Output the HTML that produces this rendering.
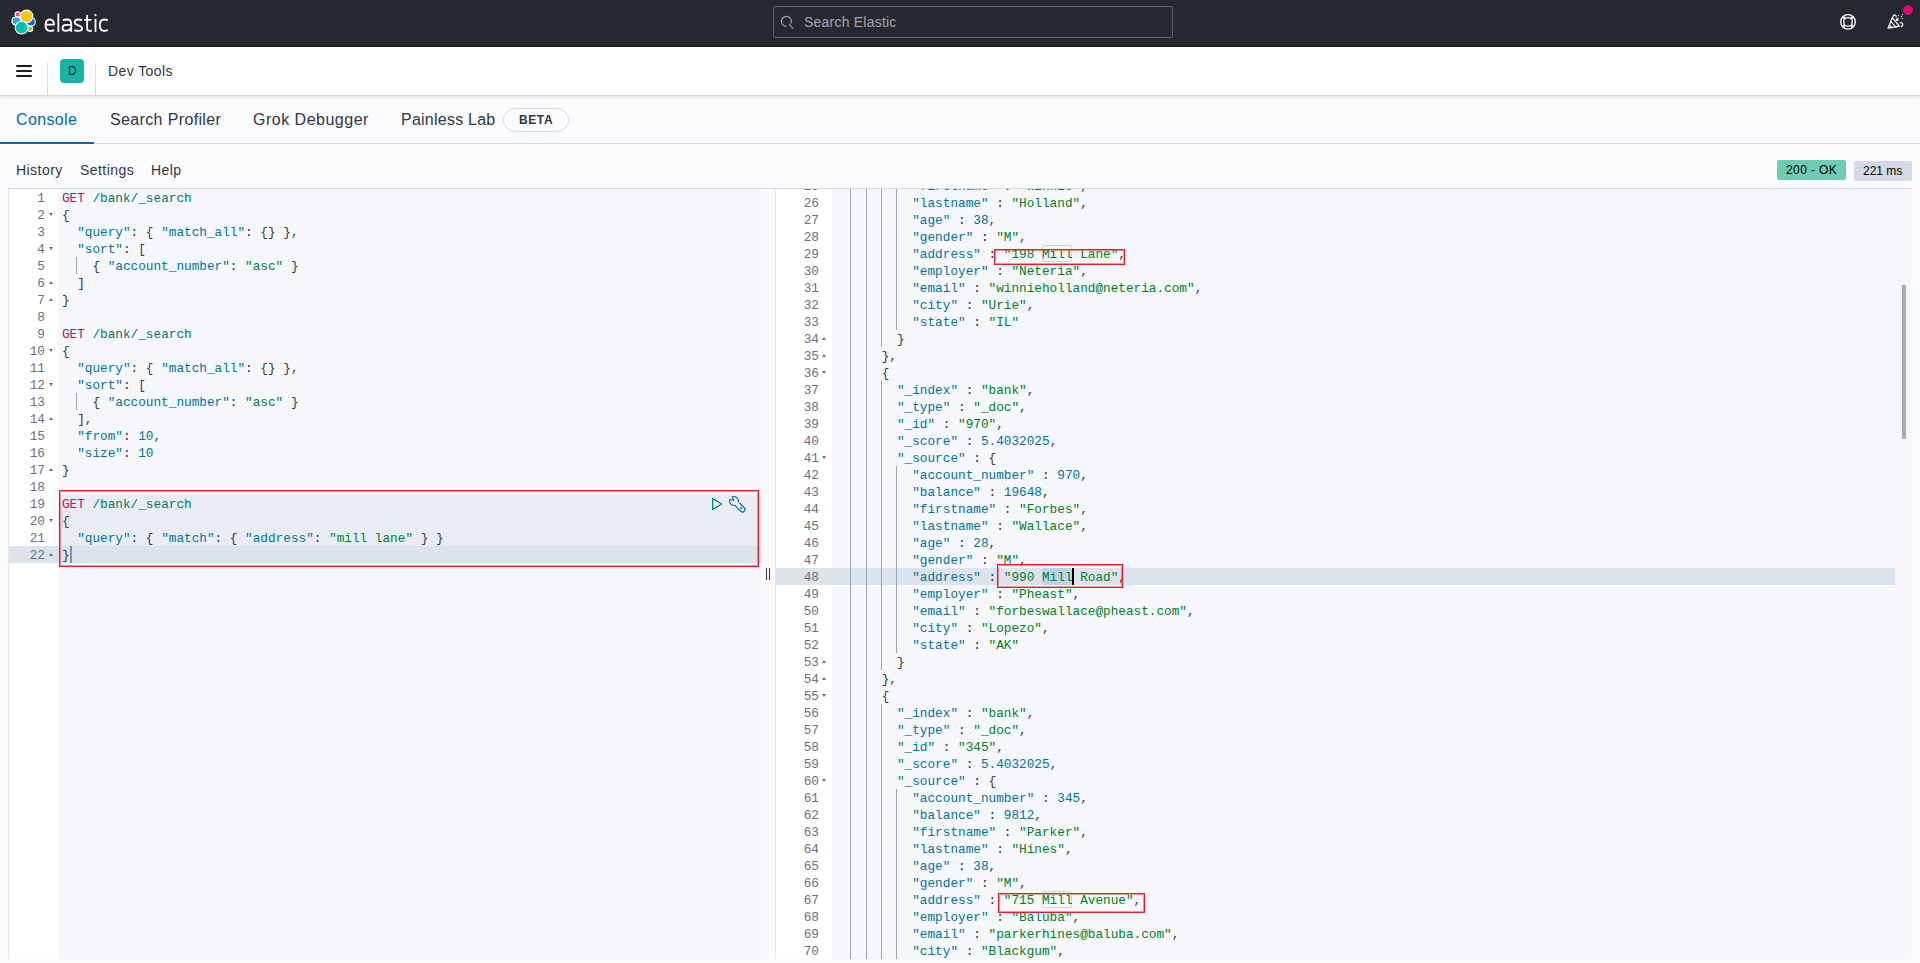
<!DOCTYPE html>
<html><head><meta charset="utf-8">
<style>
*{box-sizing:border-box;margin:0;padding:0}
html,body{width:1920px;height:963px;overflow:hidden;background:#fafbfd;font-family:"Liberation Sans",sans-serif;color:#343741}
.a{position:absolute}
#hdr{position:absolute;left:0;top:0;width:1920px;height:47px;background:#25282f;border-bottom:1px solid #1a1c21}
#bar{position:absolute;left:0;top:47px;width:1920px;height:49px;background:#fff;border-bottom:1px solid #d3dae6;box-shadow:0 1px 3px rgba(0,0,0,.06),0 3px 6px rgba(0,0,0,.03)}
.txt{position:absolute;white-space:pre;line-height:1}
.tab{position:absolute;top:112px;font-size:16px;letter-spacing:.36px;color:#343741;white-space:pre;line-height:16px}
.ctl{position:absolute;top:163px;font-size:14px;letter-spacing:.45px;color:#343741;white-space:pre;line-height:14px}
.ed{position:absolute;background:#f5f7fa}
.gut{position:absolute;background:#fff}
.ln{position:absolute;height:17px;line-height:17px;text-align:right;font-family:"Liberation Mono",monospace;font-size:12.72px;color:#69707d;white-space:pre;padding-top:1px}
.cl{position:absolute;height:17px;line-height:17px;font-family:"Liberation Mono",monospace;font-size:12.72px;color:#343741;white-space:pre;padding-top:1px}
.g{position:absolute;width:1px;height:17px}
.fold{position:absolute;width:0;height:0;border-left:2.5px solid transparent;border-right:2.5px solid transparent}
.fold.d{border-top:3px solid #69707d}
.fold.u{border-bottom:3px solid #69707d}
.m{color:#c80a68}
.u{color:#00756c}
.k{color:#0073a0}
.s{color:#018026}
.n{color:#0073a0}
.rb{position:absolute;border:1px solid #ec1c24;box-shadow:inset 0 0 0 1px rgba(236,28,36,.45)}
</style></head><body>
<!-- top header -->
<div id="hdr"></div>
<svg class="a" style="left:0;top:0" width="48" height="47" viewBox="0 0 48 47">
  <g stroke="#fff" stroke-width="1.1">
  <circle cx="17.8" cy="14.6" r="2.7" fill="#f04e98"/>
  <path d="M13.2 17.6 C16 16.6 19.5 17.2 21.2 19.6 L18.6 25.2 C16.2 25.8 13.8 25.2 12.6 23.4 C11.6 21.6 11.8 18.6 13.2 17.6Z" fill="#1ba9f5"/>
  <path d="M34.2 18.6 C35.6 19.8 35.6 23.4 34.2 24.8 C32.6 26.2 29.4 25.8 27.8 25 L25.6 22.4 L27.6 19.2 C29.6 18.2 32.6 17.6 34.2 18.6Z" fill="#0b64dd"/>
  <circle cx="30" cy="28.8" r="2.7" fill="#93c90e"/>
  <circle cx="26.6" cy="16.4" r="6.3" fill="#fec514"/>
  <circle cx="21.6" cy="27.6" r="6.4" fill="#00bfb3"/>
  </g>
</svg>
<svg class="a" style="left:0;top:0" width="120" height="47" viewBox="0 0 120 47"><g fill="none" stroke="#fff" stroke-width="1.8">
<path d="M45.6 24.7 H54 C54 21.1 52.3 19.5 49.8 19.5 C46.8 19.5 45.5 22 45.5 25.2 C45.5 28.8 47.2 30.9 50.3 30.9 C51.8 30.9 53 30.6 54.2 30.1"/>
<path d="M58.35 13.6 V31.8"/>
<path d="M62.8 20.2 C64 19.7 65.5 19.5 66.8 19.5 C69.8 19.5 71.2 20.8 71.2 23.5 V31.8 M71.2 24.9 H66.3 C63.8 24.9 62.5 26.2 62.5 28 C62.5 29.9 63.9 30.9 65.8 30.9 C68.4 30.9 70.3 29.8 71.2 28.3"/>
<path d="M82 20.1 C80.8 19.6 79.5 19.5 78.2 19.5 C75.8 19.5 74.7 20.8 74.7 22.3 C74.7 24 75.8 24.7 78.3 25.3 C81 25.9 82.1 26.8 82.1 28.5 C82.1 30.2 80.8 30.9 78.3 30.9 C76.8 30.9 75.5 30.6 74.2 30.1"/>
<path d="M87.15 14.9 V28.6 C87.15 30.3 88 30.9 89.5 30.9 C90.3 30.9 91.2 30.8 91.9 30.6 M84.2 19.9 H91.4"/>
<path d="M95.5 18.9 V31.8"/>
<path d="M107.8 20.2 C106.6 19.7 105.4 19.5 104.2 19.5 C100.9 19.5 99.8 22 99.8 25.2 C99.8 28.6 101 30.9 104.3 30.9 C105.6 30.9 106.8 30.6 107.8 30.2"/>
</g><circle cx="95.5" cy="15.2" r="1.1" fill="#fff"/></svg>
<!-- search -->
<div class="a" style="left:773px;top:6px;width:400px;height:32px;border:1px solid #5a5e66;border-radius:2px;background:#25282f"></div>
<svg class="a" style="left:778px;top:12px" width="18" height="18" viewBox="0 0 18 18"><g fill="none" stroke="#a2a6ad" stroke-width="1.15" stroke-linecap="round"><path d="M7.96 14.38 A5 5 0 1 1 13.1 11.11"/><path d="M11.4 12.6 L14.9 16.06"/></g></svg>
<div class="txt" style="left:804px;top:15px;font-size:14px;letter-spacing:.22px;color:#a2a6ad">Search Elastic</div>
<!-- help icon -->
<svg class="a" style="left:1838px;top:12px" width="20" height="20" viewBox="0 0 20 20"><g fill="none" stroke="#fff"><circle cx="10" cy="9.9" r="7.3" stroke-width="1.3"/><circle cx="10" cy="9.9" r="4.3" stroke-width="1.3"/><path d="M5.05 4.95 L6.75 6.65 M14.95 4.95 L13.25 6.65 M5.05 14.85 L6.75 13.15 M14.95 14.85 L13.25 13.15" stroke-width="2.4"/></g></svg>
<!-- news icon -->
<svg class="a" style="left:1884px;top:10px" width="24" height="24" viewBox="0 0 24 24"><g fill="none" stroke="#fff" stroke-width="1.2" stroke-linecap="round" stroke-linejoin="round"><path d="M4.1 18.1 L8.4 7.6 L15.3 16.1 Z"/><path d="M6.9 11.6 L11.9 17.1 M5.5 15.2 L8 17.9"/><path d="M9 6.6 C9.2 4.2 12.2 4.1 12.2 6.8"/><path d="M16.2 12.6 C19.2 12.3 19.6 15.8 17.3 16.6"/><path d="M14.3 8.4 L12.6 10.3 M12.5 8.9 L12.6 10.3 L14 10.3"/></g><g fill="#fff"><circle cx="14.4" cy="5.6" r=".6"/><circle cx="17.5" cy="6.4" r=".6"/><circle cx="18.4" cy="4.5" r=".6"/><circle cx="18.4" cy="8.5" r=".6"/></g></svg>
<div class="a" style="left:1902.7px;top:4.7px;width:10.6px;height:10.6px;border-radius:50%;background:#dd0a73"></div>

<!-- breadcrumb bar -->
<div id="bar"></div>
<div class="a" style="left:16px;top:65px;width:16px;height:2px;background:#1a1c21;border-radius:1px"></div>
<div class="a" style="left:16px;top:70px;width:16px;height:2px;background:#1a1c21;border-radius:1px"></div>
<div class="a" style="left:16px;top:75px;width:16px;height:2px;background:#1a1c21;border-radius:1px"></div>
<div class="a" style="left:47px;top:63px;width:1px;height:32px;background:#d3dae6"></div>
<div class="a" style="left:60px;top:59px;width:24px;height:24px;border-radius:4px;background:#16b4a7"></div>
<div class="txt" style="left:68px;top:65px;font-size:12px;color:#1a1c21">D</div>
<div class="a" style="left:95px;top:63px;width:1px;height:32px;background:#d3dae6"></div>
<div class="txt" style="left:108px;top:64px;font-size:14px;letter-spacing:.4px;color:#343741">Dev Tools</div>

<!-- tabs -->
<div class="a" style="left:0;top:143px;width:1920px;height:1px;background:#d3dae6"></div>
<div class="a" style="left:0;top:142px;width:94px;height:2px;background:#006bb4"></div>
<div class="tab" style="left:16px;color:#006bb4">Console</div>
<div class="tab" style="left:110px">Search Profiler</div>
<div class="tab" style="left:253px;letter-spacing:.5px">Grok Debugger</div>
<div class="tab" style="left:401px;letter-spacing:.24px">Painless Lab</div>
<div class="a" style="left:503px;top:108px;width:66px;height:24px;border:1px solid #d3dae6;border-radius:12px"></div>
<div class="txt" style="left:519px;top:114px;font-size:12px;font-weight:bold;letter-spacing:.6px;color:#343741">BETA</div>

<!-- controls -->
<div class="ctl" style="left:16px">History</div>
<div class="ctl" style="left:80px">Settings</div>
<div class="ctl" style="left:151px">Help</div>
<div class="a" style="left:1777px;top:160px;width:69px;height:20px;border-radius:2px;background:#6dccb1"></div>
<div class="txt" style="left:1786px;top:164px;font-size:12px;letter-spacing:.4px;color:#000">200 - OK</div>
<div class="a" style="left:1854px;top:161px;width:58px;height:20px;border-radius:2px;background:#d3dae6"></div>
<div class="txt" style="left:1863px;top:165px;font-size:12px;color:#000">221 ms</div>

<!-- editor frame -->
<div class="a" style="left:8px;top:188px;width:1904px;height:1px;background:#d3dae6"></div>
<div class="a" style="left:8px;top:189px;width:1px;height:770px;background:#e3e8f0"></div>
<div class="gut" style="left:9px;top:189px;width:49px;height:770px"></div>
<div class="ed" style="left:58px;top:189px;width:703px;height:770px"></div>
<div class="a" style="left:761px;top:189px;width:14px;height:770px;background:#f9fafc"></div>
<div class="a" style="left:775px;top:189px;width:1px;height:770px;background:#e3e8f0"></div>
<div class="gut" style="left:776px;top:189px;width:56px;height:770px"></div>
<div class="ed" style="left:832px;top:189px;width:1079px;height:770px"></div>

<!-- left markers -->
<div class="a" style="left:58px;top:495px;width:703px;height:51px;background:#e9edf3"></div>
<div class="a" style="left:9px;top:546px;width:752px;height:17px;background:#dde3ec"></div>
<div class="a" style="left:62px;top:511px;width:7px;height:17px;border:1px solid #d3dae6;border-radius:2px"></div>
<div class="ln" style="top:189px;left:9px;width:36px">1</div><div class="cl" style="left:61.90px;top:189px"><span class="m">GET</span> <span class="u">/bank/_search</span></div><div class="ln" style="top:206px;left:9px;width:36px">2</div><div class="fold d" style="left:49px;top:213px"></div><div class="cl" style="left:61.90px;top:206px">{</div><div class="ln" style="top:223px;left:9px;width:36px">3</div><div class="cl" style="left:61.90px;top:223px">  <span class="k">&quot;query&quot;</span>: { <span class="k">&quot;match_all&quot;</span>: {} },</div><div class="ln" style="top:240px;left:9px;width:36px">4</div><div class="fold d" style="left:49px;top:247px"></div><div class="cl" style="left:61.90px;top:240px">  <span class="k">&quot;sort&quot;</span>: [</div><div class="ln" style="top:257px;left:9px;width:36px">5</div><div class="g" style="left:76px;top:257px;background:#98a2b3"></div><div class="cl" style="left:61.90px;top:257px">    { <span class="k">&quot;account_number&quot;</span>: <span class="s">&quot;asc&quot;</span> }</div><div class="ln" style="top:274px;left:9px;width:36px">6</div><div class="fold u" style="left:49px;top:281px"></div><div class="cl" style="left:61.90px;top:274px">  ]</div><div class="ln" style="top:291px;left:9px;width:36px">7</div><div class="fold u" style="left:49px;top:298px"></div><div class="cl" style="left:61.90px;top:291px">}</div><div class="ln" style="top:308px;left:9px;width:36px">8</div><div class="cl" style="left:61.90px;top:308px"></div><div class="ln" style="top:325px;left:9px;width:36px">9</div><div class="cl" style="left:61.90px;top:325px"><span class="m">GET</span> <span class="u">/bank/_search</span></div><div class="ln" style="top:342px;left:9px;width:36px">10</div><div class="fold d" style="left:49px;top:349px"></div><div class="cl" style="left:61.90px;top:342px">{</div><div class="ln" style="top:359px;left:9px;width:36px">11</div><div class="cl" style="left:61.90px;top:359px">  <span class="k">&quot;query&quot;</span>: { <span class="k">&quot;match_all&quot;</span>: {} },</div><div class="ln" style="top:376px;left:9px;width:36px">12</div><div class="fold d" style="left:49px;top:383px"></div><div class="cl" style="left:61.90px;top:376px">  <span class="k">&quot;sort&quot;</span>: [</div><div class="ln" style="top:393px;left:9px;width:36px">13</div><div class="g" style="left:76px;top:393px;background:#98a2b3"></div><div class="cl" style="left:61.90px;top:393px">    { <span class="k">&quot;account_number&quot;</span>: <span class="s">&quot;asc&quot;</span> }</div><div class="ln" style="top:410px;left:9px;width:36px">14</div><div class="fold u" style="left:49px;top:417px"></div><div class="cl" style="left:61.90px;top:410px">  ],</div><div class="ln" style="top:427px;left:9px;width:36px">15</div><div class="cl" style="left:61.90px;top:427px">  <span class="k">&quot;from&quot;</span>: <span class="n">10</span>,</div><div class="ln" style="top:444px;left:9px;width:36px">16</div><div class="cl" style="left:61.90px;top:444px">  <span class="k">&quot;size&quot;</span>: <span class="n">10</span></div><div class="ln" style="top:461px;left:9px;width:36px">17</div><div class="fold u" style="left:49px;top:468px"></div><div class="cl" style="left:61.90px;top:461px">}</div><div class="ln" style="top:478px;left:9px;width:36px">18</div><div class="cl" style="left:61.90px;top:478px"></div><div class="ln" style="top:495px;left:9px;width:36px">19</div><div class="cl" style="left:61.90px;top:495px"><span class="m">GET</span> <span class="u">/bank/_search</span></div><div class="ln" style="top:512px;left:9px;width:36px">20</div><div class="fold d" style="left:49px;top:519px"></div><div class="cl" style="left:61.90px;top:512px">{</div><div class="ln" style="top:529px;left:9px;width:36px">21</div><div class="cl" style="left:61.90px;top:529px">  <span class="k">&quot;query&quot;</span>: { <span class="k">&quot;match&quot;</span>: { <span class="k">&quot;address&quot;</span>: <span class="s">&quot;mill lane&quot;</span> } }</div><div class="ln" style="top:546px;left:9px;width:36px">22</div><div class="fold u" style="left:49px;top:553px"></div><div class="cl" style="left:61.90px;top:546px">}</div>
<div class="a" style="left:70px;top:546px;width:2px;height:17px;background:#8a919e"></div>
<div class="rb" style="left:59px;top:490px;width:700px;height:77px"></div>
<svg class="a" style="left:710px;top:496px" width="14" height="16" viewBox="0 0 14 16"><path d="M2.6 2.4 L11.8 8 L2.6 13.6 Z" fill="none" stroke="#017d73" stroke-width="1.2" stroke-linejoin="round"/></svg>
<svg class="a" style="left:724px;top:491px" width="24" height="24" viewBox="0 0 24 24"><path d="M8.48 5.82 A4.45 4.45 0 0 1 14.36 10.89 M15.97 12.51 L20.22 16.75 A2.45 2.45 0 0 1 16.75 20.22 L10.89 14.36 A4.45 4.45 0 0 1 5.82 8.48 L9.5 9.5 L8.48 5.82" fill="none" stroke="#006bb4" stroke-width="1.15" stroke-linejoin="round" stroke-linecap="round"/><circle cx="17.14" cy="17.14" r=".95" fill="#006bb4"/></svg>
<!-- resizer -->
<div class="a" style="left:766px;top:568px;width:1px;height:12px;background:#343741"></div>
<div class="a" style="left:769px;top:568px;width:1px;height:12px;background:#343741"></div>

<!-- right markers -->
<div class="a" style="left:776px;top:568px;width:1119px;height:17px;background:#dde3ec"></div>
<div class="a" style="left:1042px;top:568px;width:30px;height:17px;background:#b9d3ea;border-radius:3px"></div>
<div class="a" style="left:1042px;top:245px;width:30px;height:17px;border:1px solid #ccd4df;border-radius:2px"></div>
<div class="a" style="left:1042px;top:891px;width:30px;height:17px;border:1px solid #ccd4df;border-radius:2px"></div>
<div class="a" style="left:0;top:189px;width:1920px;height:770px;overflow:hidden"><div class="ln" style="top:-12px;left:776px;width:43px">25</div><div class="g" style="left:850px;top:-12px;background:#98a2b3"></div><div class="g" style="left:866px;top:-12px;background:#98a2b3"></div><div class="g" style="left:881px;top:-12px;background:#98a2b3"></div><div class="g" style="left:896px;top:-12px;background:#98a2b3"></div><div class="cl" style="left:835.90px;top:-12px">          <span class="k">&quot;firstname&quot;</span> : <span class="s">&quot;Winnie&quot;</span>,</div><div class="ln" style="top:5px;left:776px;width:43px">26</div><div class="g" style="left:850px;top:5px;background:#98a2b3"></div><div class="g" style="left:866px;top:5px;background:#98a2b3"></div><div class="g" style="left:881px;top:5px;background:#98a2b3"></div><div class="g" style="left:896px;top:5px;background:#98a2b3"></div><div class="cl" style="left:835.90px;top:5px">          <span class="k">&quot;lastname&quot;</span> : <span class="s">&quot;Holland&quot;</span>,</div><div class="ln" style="top:22px;left:776px;width:43px">27</div><div class="g" style="left:850px;top:22px;background:#98a2b3"></div><div class="g" style="left:866px;top:22px;background:#98a2b3"></div><div class="g" style="left:881px;top:22px;background:#98a2b3"></div><div class="g" style="left:896px;top:22px;background:#98a2b3"></div><div class="cl" style="left:835.90px;top:22px">          <span class="k">&quot;age&quot;</span> : <span class="n">38</span>,</div><div class="ln" style="top:39px;left:776px;width:43px">28</div><div class="g" style="left:850px;top:39px;background:#98a2b3"></div><div class="g" style="left:866px;top:39px;background:#98a2b3"></div><div class="g" style="left:881px;top:39px;background:#98a2b3"></div><div class="g" style="left:896px;top:39px;background:#98a2b3"></div><div class="cl" style="left:835.90px;top:39px">          <span class="k">&quot;gender&quot;</span> : <span class="s">&quot;M&quot;</span>,</div><div class="ln" style="top:56px;left:776px;width:43px">29</div><div class="g" style="left:850px;top:56px;background:#98a2b3"></div><div class="g" style="left:866px;top:56px;background:#98a2b3"></div><div class="g" style="left:881px;top:56px;background:#98a2b3"></div><div class="g" style="left:896px;top:56px;background:#98a2b3"></div><div class="cl" style="left:835.90px;top:56px">          <span class="k">&quot;address&quot;</span> : <span class="s">&quot;198 Mill Lane&quot;</span>,</div><div class="ln" style="top:73px;left:776px;width:43px">30</div><div class="g" style="left:850px;top:73px;background:#98a2b3"></div><div class="g" style="left:866px;top:73px;background:#98a2b3"></div><div class="g" style="left:881px;top:73px;background:#98a2b3"></div><div class="g" style="left:896px;top:73px;background:#98a2b3"></div><div class="cl" style="left:835.90px;top:73px">          <span class="k">&quot;employer&quot;</span> : <span class="s">&quot;Neteria&quot;</span>,</div><div class="ln" style="top:90px;left:776px;width:43px">31</div><div class="g" style="left:850px;top:90px;background:#98a2b3"></div><div class="g" style="left:866px;top:90px;background:#98a2b3"></div><div class="g" style="left:881px;top:90px;background:#98a2b3"></div><div class="g" style="left:896px;top:90px;background:#98a2b3"></div><div class="cl" style="left:835.90px;top:90px">          <span class="k">&quot;email&quot;</span> : <span class="s">&quot;winnieholland@neteria.com&quot;</span>,</div><div class="ln" style="top:107px;left:776px;width:43px">32</div><div class="g" style="left:850px;top:107px;background:#98a2b3"></div><div class="g" style="left:866px;top:107px;background:#98a2b3"></div><div class="g" style="left:881px;top:107px;background:#98a2b3"></div><div class="g" style="left:896px;top:107px;background:#98a2b3"></div><div class="cl" style="left:835.90px;top:107px">          <span class="k">&quot;city&quot;</span> : <span class="s">&quot;Urie&quot;</span>,</div><div class="ln" style="top:124px;left:776px;width:43px">33</div><div class="g" style="left:850px;top:124px;background:#98a2b3"></div><div class="g" style="left:866px;top:124px;background:#98a2b3"></div><div class="g" style="left:881px;top:124px;background:#98a2b3"></div><div class="g" style="left:896px;top:124px;background:#98a2b3"></div><div class="cl" style="left:835.90px;top:124px">          <span class="k">&quot;state&quot;</span> : <span class="s">&quot;IL&quot;</span></div><div class="ln" style="top:141px;left:776px;width:43px">34</div><div class="fold u" style="left:822px;top:148px"></div><div class="g" style="left:850px;top:141px;background:#98a2b3"></div><div class="g" style="left:866px;top:141px;background:#98a2b3"></div><div class="g" style="left:881px;top:141px;background:#98a2b3"></div><div class="cl" style="left:835.90px;top:141px">        }</div><div class="ln" style="top:158px;left:776px;width:43px">35</div><div class="fold u" style="left:822px;top:165px"></div><div class="g" style="left:850px;top:158px;background:#98a2b3"></div><div class="g" style="left:866px;top:158px;background:#98a2b3"></div><div class="cl" style="left:835.90px;top:158px">      },</div><div class="ln" style="top:175px;left:776px;width:43px">36</div><div class="fold d" style="left:822px;top:182px"></div><div class="g" style="left:850px;top:175px;background:#98a2b3"></div><div class="g" style="left:866px;top:175px;background:#98a2b3"></div><div class="cl" style="left:835.90px;top:175px">      {</div><div class="ln" style="top:192px;left:776px;width:43px">37</div><div class="g" style="left:850px;top:192px;background:#98a2b3"></div><div class="g" style="left:866px;top:192px;background:#98a2b3"></div><div class="g" style="left:881px;top:192px;background:#98a2b3"></div><div class="cl" style="left:835.90px;top:192px">        <span class="k">&quot;_index&quot;</span> : <span class="s">&quot;bank&quot;</span>,</div><div class="ln" style="top:209px;left:776px;width:43px">38</div><div class="g" style="left:850px;top:209px;background:#98a2b3"></div><div class="g" style="left:866px;top:209px;background:#98a2b3"></div><div class="g" style="left:881px;top:209px;background:#98a2b3"></div><div class="cl" style="left:835.90px;top:209px">        <span class="k">&quot;_type&quot;</span> : <span class="s">&quot;_doc&quot;</span>,</div><div class="ln" style="top:226px;left:776px;width:43px">39</div><div class="g" style="left:850px;top:226px;background:#98a2b3"></div><div class="g" style="left:866px;top:226px;background:#98a2b3"></div><div class="g" style="left:881px;top:226px;background:#98a2b3"></div><div class="cl" style="left:835.90px;top:226px">        <span class="k">&quot;_id&quot;</span> : <span class="s">&quot;970&quot;</span>,</div><div class="ln" style="top:243px;left:776px;width:43px">40</div><div class="g" style="left:850px;top:243px;background:#98a2b3"></div><div class="g" style="left:866px;top:243px;background:#98a2b3"></div><div class="g" style="left:881px;top:243px;background:#98a2b3"></div><div class="cl" style="left:835.90px;top:243px">        <span class="k">&quot;_score&quot;</span> : <span class="n">5.4032025</span>,</div><div class="ln" style="top:260px;left:776px;width:43px">41</div><div class="fold d" style="left:822px;top:267px"></div><div class="g" style="left:850px;top:260px;background:#98a2b3"></div><div class="g" style="left:866px;top:260px;background:#98a2b3"></div><div class="g" style="left:881px;top:260px;background:#98a2b3"></div><div class="cl" style="left:835.90px;top:260px">        <span class="k">&quot;_source&quot;</span> : {</div><div class="ln" style="top:277px;left:776px;width:43px">42</div><div class="g" style="left:850px;top:277px;background:#98a2b3"></div><div class="g" style="left:866px;top:277px;background:#98a2b3"></div><div class="g" style="left:881px;top:277px;background:#98a2b3"></div><div class="g" style="left:896px;top:277px;background:#98a2b3"></div><div class="cl" style="left:835.90px;top:277px">          <span class="k">&quot;account_number&quot;</span> : <span class="n">970</span>,</div><div class="ln" style="top:294px;left:776px;width:43px">43</div><div class="g" style="left:850px;top:294px;background:#98a2b3"></div><div class="g" style="left:866px;top:294px;background:#98a2b3"></div><div class="g" style="left:881px;top:294px;background:#98a2b3"></div><div class="g" style="left:896px;top:294px;background:#98a2b3"></div><div class="cl" style="left:835.90px;top:294px">          <span class="k">&quot;balance&quot;</span> : <span class="n">19648</span>,</div><div class="ln" style="top:311px;left:776px;width:43px">44</div><div class="g" style="left:850px;top:311px;background:#98a2b3"></div><div class="g" style="left:866px;top:311px;background:#98a2b3"></div><div class="g" style="left:881px;top:311px;background:#98a2b3"></div><div class="g" style="left:896px;top:311px;background:#98a2b3"></div><div class="cl" style="left:835.90px;top:311px">          <span class="k">&quot;firstname&quot;</span> : <span class="s">&quot;Forbes&quot;</span>,</div><div class="ln" style="top:328px;left:776px;width:43px">45</div><div class="g" style="left:850px;top:328px;background:#98a2b3"></div><div class="g" style="left:866px;top:328px;background:#98a2b3"></div><div class="g" style="left:881px;top:328px;background:#98a2b3"></div><div class="g" style="left:896px;top:328px;background:#98a2b3"></div><div class="cl" style="left:835.90px;top:328px">          <span class="k">&quot;lastname&quot;</span> : <span class="s">&quot;Wallace&quot;</span>,</div><div class="ln" style="top:345px;left:776px;width:43px">46</div><div class="g" style="left:850px;top:345px;background:#98a2b3"></div><div class="g" style="left:866px;top:345px;background:#98a2b3"></div><div class="g" style="left:881px;top:345px;background:#98a2b3"></div><div class="g" style="left:896px;top:345px;background:#98a2b3"></div><div class="cl" style="left:835.90px;top:345px">          <span class="k">&quot;age&quot;</span> : <span class="n">28</span>,</div><div class="ln" style="top:362px;left:776px;width:43px">47</div><div class="g" style="left:850px;top:362px;background:#98a2b3"></div><div class="g" style="left:866px;top:362px;background:#98a2b3"></div><div class="g" style="left:881px;top:362px;background:#98a2b3"></div><div class="g" style="left:896px;top:362px;background:#98a2b3"></div><div class="cl" style="left:835.90px;top:362px">          <span class="k">&quot;gender&quot;</span> : <span class="s">&quot;M&quot;</span>,</div><div class="ln" style="top:379px;left:776px;width:43px">48</div><div class="g" style="left:850px;top:379px;background:#98a2b3"></div><div class="g" style="left:866px;top:379px;background:#98a2b3"></div><div class="g" style="left:881px;top:379px;background:#98a2b3"></div><div class="g" style="left:896px;top:379px;background:#98a2b3"></div><div class="cl" style="left:835.90px;top:379px">          <span class="k">&quot;address&quot;</span> : <span class="s">&quot;990 Mill Road&quot;</span>,</div><div class="ln" style="top:396px;left:776px;width:43px">49</div><div class="g" style="left:850px;top:396px;background:#98a2b3"></div><div class="g" style="left:866px;top:396px;background:#98a2b3"></div><div class="g" style="left:881px;top:396px;background:#98a2b3"></div><div class="g" style="left:896px;top:396px;background:#98a2b3"></div><div class="cl" style="left:835.90px;top:396px">          <span class="k">&quot;employer&quot;</span> : <span class="s">&quot;Pheast&quot;</span>,</div><div class="ln" style="top:413px;left:776px;width:43px">50</div><div class="g" style="left:850px;top:413px;background:#98a2b3"></div><div class="g" style="left:866px;top:413px;background:#98a2b3"></div><div class="g" style="left:881px;top:413px;background:#98a2b3"></div><div class="g" style="left:896px;top:413px;background:#98a2b3"></div><div class="cl" style="left:835.90px;top:413px">          <span class="k">&quot;email&quot;</span> : <span class="s">&quot;forbeswallace@pheast.com&quot;</span>,</div><div class="ln" style="top:430px;left:776px;width:43px">51</div><div class="g" style="left:850px;top:430px;background:#98a2b3"></div><div class="g" style="left:866px;top:430px;background:#98a2b3"></div><div class="g" style="left:881px;top:430px;background:#98a2b3"></div><div class="g" style="left:896px;top:430px;background:#98a2b3"></div><div class="cl" style="left:835.90px;top:430px">          <span class="k">&quot;city&quot;</span> : <span class="s">&quot;Lopezo&quot;</span>,</div><div class="ln" style="top:447px;left:776px;width:43px">52</div><div class="g" style="left:850px;top:447px;background:#98a2b3"></div><div class="g" style="left:866px;top:447px;background:#98a2b3"></div><div class="g" style="left:881px;top:447px;background:#98a2b3"></div><div class="g" style="left:896px;top:447px;background:#98a2b3"></div><div class="cl" style="left:835.90px;top:447px">          <span class="k">&quot;state&quot;</span> : <span class="s">&quot;AK&quot;</span></div><div class="ln" style="top:464px;left:776px;width:43px">53</div><div class="fold u" style="left:822px;top:471px"></div><div class="g" style="left:850px;top:464px;background:#98a2b3"></div><div class="g" style="left:866px;top:464px;background:#98a2b3"></div><div class="g" style="left:881px;top:464px;background:#98a2b3"></div><div class="cl" style="left:835.90px;top:464px">        }</div><div class="ln" style="top:481px;left:776px;width:43px">54</div><div class="fold u" style="left:822px;top:488px"></div><div class="g" style="left:850px;top:481px;background:#98a2b3"></div><div class="g" style="left:866px;top:481px;background:#98a2b3"></div><div class="cl" style="left:835.90px;top:481px">      },</div><div class="ln" style="top:498px;left:776px;width:43px">55</div><div class="fold d" style="left:822px;top:505px"></div><div class="g" style="left:850px;top:498px;background:#98a2b3"></div><div class="g" style="left:866px;top:498px;background:#98a2b3"></div><div class="cl" style="left:835.90px;top:498px">      {</div><div class="ln" style="top:515px;left:776px;width:43px">56</div><div class="g" style="left:850px;top:515px;background:#98a2b3"></div><div class="g" style="left:866px;top:515px;background:#98a2b3"></div><div class="g" style="left:881px;top:515px;background:#98a2b3"></div><div class="cl" style="left:835.90px;top:515px">        <span class="k">&quot;_index&quot;</span> : <span class="s">&quot;bank&quot;</span>,</div><div class="ln" style="top:532px;left:776px;width:43px">57</div><div class="g" style="left:850px;top:532px;background:#98a2b3"></div><div class="g" style="left:866px;top:532px;background:#98a2b3"></div><div class="g" style="left:881px;top:532px;background:#98a2b3"></div><div class="cl" style="left:835.90px;top:532px">        <span class="k">&quot;_type&quot;</span> : <span class="s">&quot;_doc&quot;</span>,</div><div class="ln" style="top:549px;left:776px;width:43px">58</div><div class="g" style="left:850px;top:549px;background:#98a2b3"></div><div class="g" style="left:866px;top:549px;background:#98a2b3"></div><div class="g" style="left:881px;top:549px;background:#98a2b3"></div><div class="cl" style="left:835.90px;top:549px">        <span class="k">&quot;_id&quot;</span> : <span class="s">&quot;345&quot;</span>,</div><div class="ln" style="top:566px;left:776px;width:43px">59</div><div class="g" style="left:850px;top:566px;background:#98a2b3"></div><div class="g" style="left:866px;top:566px;background:#98a2b3"></div><div class="g" style="left:881px;top:566px;background:#98a2b3"></div><div class="cl" style="left:835.90px;top:566px">        <span class="k">&quot;_score&quot;</span> : <span class="n">5.4032025</span>,</div><div class="ln" style="top:583px;left:776px;width:43px">60</div><div class="fold d" style="left:822px;top:590px"></div><div class="g" style="left:850px;top:583px;background:#98a2b3"></div><div class="g" style="left:866px;top:583px;background:#98a2b3"></div><div class="g" style="left:881px;top:583px;background:#98a2b3"></div><div class="cl" style="left:835.90px;top:583px">        <span class="k">&quot;_source&quot;</span> : {</div><div class="ln" style="top:600px;left:776px;width:43px">61</div><div class="g" style="left:850px;top:600px;background:#98a2b3"></div><div class="g" style="left:866px;top:600px;background:#98a2b3"></div><div class="g" style="left:881px;top:600px;background:#98a2b3"></div><div class="g" style="left:896px;top:600px;background:#98a2b3"></div><div class="cl" style="left:835.90px;top:600px">          <span class="k">&quot;account_number&quot;</span> : <span class="n">345</span>,</div><div class="ln" style="top:617px;left:776px;width:43px">62</div><div class="g" style="left:850px;top:617px;background:#98a2b3"></div><div class="g" style="left:866px;top:617px;background:#98a2b3"></div><div class="g" style="left:881px;top:617px;background:#98a2b3"></div><div class="g" style="left:896px;top:617px;background:#98a2b3"></div><div class="cl" style="left:835.90px;top:617px">          <span class="k">&quot;balance&quot;</span> : <span class="n">9812</span>,</div><div class="ln" style="top:634px;left:776px;width:43px">63</div><div class="g" style="left:850px;top:634px;background:#98a2b3"></div><div class="g" style="left:866px;top:634px;background:#98a2b3"></div><div class="g" style="left:881px;top:634px;background:#98a2b3"></div><div class="g" style="left:896px;top:634px;background:#98a2b3"></div><div class="cl" style="left:835.90px;top:634px">          <span class="k">&quot;firstname&quot;</span> : <span class="s">&quot;Parker&quot;</span>,</div><div class="ln" style="top:651px;left:776px;width:43px">64</div><div class="g" style="left:850px;top:651px;background:#98a2b3"></div><div class="g" style="left:866px;top:651px;background:#98a2b3"></div><div class="g" style="left:881px;top:651px;background:#98a2b3"></div><div class="g" style="left:896px;top:651px;background:#98a2b3"></div><div class="cl" style="left:835.90px;top:651px">          <span class="k">&quot;lastname&quot;</span> : <span class="s">&quot;Hines&quot;</span>,</div><div class="ln" style="top:668px;left:776px;width:43px">65</div><div class="g" style="left:850px;top:668px;background:#98a2b3"></div><div class="g" style="left:866px;top:668px;background:#98a2b3"></div><div class="g" style="left:881px;top:668px;background:#98a2b3"></div><div class="g" style="left:896px;top:668px;background:#98a2b3"></div><div class="cl" style="left:835.90px;top:668px">          <span class="k">&quot;age&quot;</span> : <span class="n">38</span>,</div><div class="ln" style="top:685px;left:776px;width:43px">66</div><div class="g" style="left:850px;top:685px;background:#98a2b3"></div><div class="g" style="left:866px;top:685px;background:#98a2b3"></div><div class="g" style="left:881px;top:685px;background:#98a2b3"></div><div class="g" style="left:896px;top:685px;background:#98a2b3"></div><div class="cl" style="left:835.90px;top:685px">          <span class="k">&quot;gender&quot;</span> : <span class="s">&quot;M&quot;</span>,</div><div class="ln" style="top:702px;left:776px;width:43px">67</div><div class="g" style="left:850px;top:702px;background:#98a2b3"></div><div class="g" style="left:866px;top:702px;background:#98a2b3"></div><div class="g" style="left:881px;top:702px;background:#98a2b3"></div><div class="g" style="left:896px;top:702px;background:#98a2b3"></div><div class="cl" style="left:835.90px;top:702px">          <span class="k">&quot;address&quot;</span> : <span class="s">&quot;715 Mill Avenue&quot;</span>,</div><div class="ln" style="top:719px;left:776px;width:43px">68</div><div class="g" style="left:850px;top:719px;background:#98a2b3"></div><div class="g" style="left:866px;top:719px;background:#98a2b3"></div><div class="g" style="left:881px;top:719px;background:#98a2b3"></div><div class="g" style="left:896px;top:719px;background:#98a2b3"></div><div class="cl" style="left:835.90px;top:719px">          <span class="k">&quot;employer&quot;</span> : <span class="s">&quot;Baluba&quot;</span>,</div><div class="ln" style="top:736px;left:776px;width:43px">69</div><div class="g" style="left:850px;top:736px;background:#98a2b3"></div><div class="g" style="left:866px;top:736px;background:#98a2b3"></div><div class="g" style="left:881px;top:736px;background:#98a2b3"></div><div class="g" style="left:896px;top:736px;background:#98a2b3"></div><div class="cl" style="left:835.90px;top:736px">          <span class="k">&quot;email&quot;</span> : <span class="s">&quot;parkerhines@baluba.com&quot;</span>,</div><div class="ln" style="top:753px;left:776px;width:43px">70</div><div class="g" style="left:850px;top:753px;background:#98a2b3"></div><div class="g" style="left:866px;top:753px;background:#98a2b3"></div><div class="g" style="left:881px;top:753px;background:#98a2b3"></div><div class="g" style="left:896px;top:753px;background:#98a2b3"></div><div class="cl" style="left:835.90px;top:753px">          <span class="k">&quot;city&quot;</span> : <span class="s">&quot;Blackgum&quot;</span>,</div></div>
<div class="a" style="left:1072px;top:568px;width:2px;height:17px;background:#000"></div>
<div class="rb" style="left:994px;top:249px;width:131px;height:16px"></div>
<div class="rb" style="left:997px;top:564px;width:126px;height:24px"></div>
<div class="rb" style="left:998px;top:893px;width:147px;height:20px"></div>

<div class="a" style="left:1902px;top:285px;width:4px;height:154px;background:#a6adb7"></div>
<div class="a" style="left:0;top:959px;width:1920px;height:4px;background:#fafbfd"></div>
</body></html>
